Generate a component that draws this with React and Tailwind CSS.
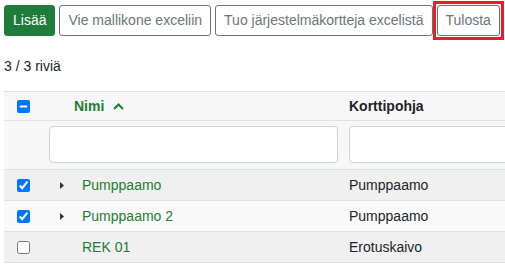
import React, { useEffect, useRef } from "react";

function Check({ checked, indeterminate }) {
  const ref = useRef(null);
  useEffect(() => {
    if (ref.current) ref.current.indeterminate = !!indeterminate;
  }, [indeterminate]);
  return (
    <input
      ref={ref}
      type="checkbox"
      defaultChecked={checked}
      className="m-0 w-[13px] h-[13px] block"
    />
  );
}

function Caret() {
  return (
    <svg width="4" height="7" viewBox="0 0 4 7" className="block">
      <polygon points="0,0 4,3.5 0,7" fill="#333" />
    </svg>
  );
}

const rows = [
  { name: "Pumppaamo", tpl: "Pumppaamo", checked: true, caret: true, bg: "bg-[#f0f0f0]" },
  { name: "Pumppaamo 2", tpl: "Pumppaamo", checked: true, caret: true, bg: "bg-[#f9f9f9]" },
  { name: "REK 01", tpl: "Erotuskaivo", checked: false, caret: false, bg: "bg-[#f0f0f0]" },
];

export default function App() {
  return (
    <div className="w-[505px] h-[267px] overflow-hidden bg-white p-1 text-[14px] text-[#212529] font-['Liberation_Sans',Arial,sans-serif]">
      <div className="flex gap-1 pt-[1px]">
        <button className="h-[31px] px-2 rounded-[3px] bg-[#1f7d3b] border border-[#1f7d3b] text-white leading-[21px]">
          Lisää
        </button>
        <button className="h-[31px] px-2 rounded-[3px] border border-[#6c757d] text-[#6c757d] leading-[21px] bg-white">
          Vie mallikone exceliin
        </button>
        <button className="h-[31px] px-2 rounded-[3px] border border-[#6c757d] text-[#6c757d] leading-[21px] bg-white">
          Tuo järjestelmäkortteja excelistä
        </button>
        <div className="relative">
          <button className="h-[31px] px-2 rounded-[3px] border border-[#6c757d] text-[#6c757d] leading-[21px] bg-white">
            Tulosta
          </button>
          <span className="absolute -inset-1 border-3 border-[#ee1c25] pointer-events-none" />
        </div>
      </div>
      <div className="mt-[20px] leading-[21px]">3 / 3 riviä</div>
      <div className="mt-[14px] mr-[-8px] border-t border-[#dee2e6]">
        <div className="flex h-[29px] items-center bg-[#f7f7f7] border-b border-[#dee2e6]">
          <div className="w-[39px] flex justify-center">
            <Check indeterminate />
          </div>
          <div className="w-[301px] pl-[31px] flex items-center gap-[9px] font-bold text-[#1e7e34]">
            <span>Nimi</span>
            <svg width="11" height="7" viewBox="0 0 11 7" className="block">
              <polyline points="1,6 5.5,1.5 10,6" fill="none" stroke="#1e7e34" strokeWidth="2" />
            </svg>
          </div>
          <div className="flex-1 pl-[5px] font-bold">Korttipohja</div>
        </div>
        <div className="flex h-[49px] items-start bg-[#f7f7f7] border-b border-[#dee2e6] pt-[5px]">
          <div className="w-[39px]" />
          <div className="w-[301px] pl-[6px] pr-[6px]">
            <div className="h-[37px] rounded-[4px] border border-[#ced4da] bg-white" />
          </div>
          <div className="flex-1 pl-[5px]">
            <div className="h-[37px] rounded-[4px] border border-[#ced4da] bg-white" />
          </div>
        </div>
        {rows.map((r) => (
          <div key={r.name} className={`flex h-[31px] items-center border-b border-[#dee2e6] ${r.bg}`}>
            <div className="w-[39px] flex justify-center">
              <Check checked={r.checked} />
            </div>
            <div className="w-[301px] flex items-center">
              <div className="w-[39px] pl-[17px]">{r.caret ? <Caret /> : null}</div>
              <span className="text-[#1e7e34]">{r.name}</span>
            </div>
            <div className="flex-1 pl-[5px]">{r.tpl}</div>
          </div>
        ))}
      </div>
    </div>
  );
}
